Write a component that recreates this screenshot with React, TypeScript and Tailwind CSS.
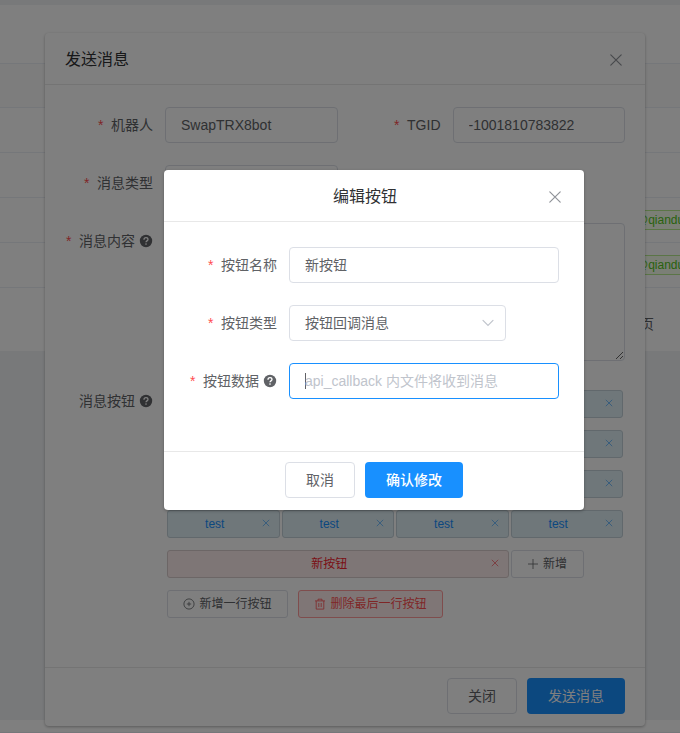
import React from 'react'

type IconProps = {
  className?: string;
}

type FieldProps = {
  label: string;
  required?: boolean;
  help?: boolean;
  children: React.ReactNode;
}

const CloseIcon = ({ className }: IconProps) => (
  <svg viewBox="0 0 16 16" fill="none" stroke="currentColor" className={className}>
    <path strokeLinecap="round" strokeWidth={1.2} d="M2.8 2.8l10.4 10.4M13.2 2.8L2.8 13.2" />
  </svg>
)

const HelpIcon = () => (
  <svg viewBox="0 0 14 14" className="ml-1 h-[14px] w-[14px] text-[#606266]">
    <circle cx="7" cy="7" r="6.2" fill="currentColor" />
    <path d="M5 5.7c0-1.2.9-2 2-2s2 .8 2 1.8c0 1.3-2 1.4-2 2.7" fill="none" stroke="#fff" strokeWidth="1.3" />
    <circle cx="7" cy="10.1" r=".8" fill="#fff" />
  </svg>
)

const PlusIcon = () => (
  <svg viewBox="0 0 12 12" fill="none" stroke="currentColor" className="h-3 w-3">
    <path d="M6 1v10M1 6h10" strokeWidth=".8" />
  </svg>
)

const CirclePlusIcon = () => (
  <svg viewBox="0 0 12 12" fill="none" stroke="currentColor" strokeWidth=".8" className="h-3 w-3">
    <circle cx="6" cy="6" r="5.1" />
    <path d="M6 3.8v4.4M3.8 6h4.4" />
  </svg>
)

const TrashIcon = () => (
  <svg viewBox="0 0 12 12" fill="none" stroke="currentColor" strokeWidth=".8" className="h-3 w-3">
    <path d="M1 2.9h10M4 2.9V1.2h4v1.7M2.2 2.9v8.2h7.6V2.9M4.8 5v4M7.2 5v4" />
  </svg>
)

const Field = ({ label, required, help, children }: FieldProps) => (
  <div className="flex">
    <div className="flex h-9 w-[100px] shrink-0 items-center justify-end pr-3 text-sm whitespace-nowrap text-[#606266]">
      {required && <span className="mr-[7.5px] text-[#ff4d4f]">*</span>}
      {label}
      {help && <HelpIcon />}
    </div>
    <div className="min-w-0 flex-1">{children}</div>
  </div>
)

const inputClass = 'h-9 w-full rounded border border-[#dcdfe6] bg-white px-[15px] text-sm text-[#606266] outline-none'

const ButtonTag = () => (
  <div className="flex h-7 items-center rounded-[3px] border border-[#c2d0d8] bg-[#dfeff5] pl-1 pr-[5px] text-xs text-[#1890ff]">
    <span className="flex-1 text-center">test</span>
    <CloseIcon className="relative -top-px h-4 w-4 p-[3.5px] opacity-80" />
  </div>
)

const TableRow = ({ tag }: { tag?: string }) => (
  <div className="flex h-[45px] items-center border-b border-[#ebeef5] pl-[626px]">
    {tag && (
      <span className="flex h-5 w-[90px] shrink-0 items-center border border-[#b7eb8f] bg-[#f6ffed] pl-[9px] text-xs text-[#52c41a]">{tag}</span>
    )}
  </div>
)

const SendDialog = () => (
  <div className="flex h-[693px] w-[600px] flex-col rounded bg-white shadow-[0_1px_3px_rgba(0,0,0,0.3)]">
    <div className="flex h-[52px] items-center justify-between border-b border-[#e8e8e8] px-5 pt-[2px] text-base text-[#303133]">
      <span>发送消息</span>
      <CloseIcon className="mr-[1px] h-4 w-4 text-[#909399]" />
    </div>
    <div className="flex flex-1 flex-col gap-[22px] px-5 pt-[22px]">
      <div className="grid grid-cols-2 gap-[15px]">
        <Field label="机器人" required>
          <input className={inputClass} defaultValue="SwapTRX8bot" />
        </Field>
        <Field label="TGID" required>
          <input className={inputClass} defaultValue="-1001810783822" />
        </Field>
      </div>
      <div className="grid grid-cols-2 gap-[15px]">
        <Field label="消息类型" required>
          <div className={inputClass} />
        </Field>
      </div>
      <Field label="消息内容" required help>
        <textarea className="block h-[138px] w-full resize rounded border border-[#dcdfe6] bg-white outline-none" />
      </Field>
      <Field label="消息按钮" help>
        <div className="flex flex-col gap-3 px-[2px] pt-[7px]">
          {/* The first rows sit behind the edit dialog */}
          {[0, 1, 2].map((row) => (
            <div key={row} className="grid grid-cols-4 gap-[2px]">
              <div className="col-span-3" />
              <div className="flex h-7 items-center justify-end rounded-[3px] border border-[#c2d0d8] bg-[#dfeff5] pr-[5px] text-[#1890ff]">
                <CloseIcon className="relative -top-px h-4 w-4 p-[3.5px] opacity-80" />
              </div>
            </div>
          ))}
          <div className="grid grid-cols-4 gap-[2px]">
            <ButtonTag />
            <ButtonTag />
            <ButtonTag />
            <ButtonTag />
          </div>
          <div className="grid grid-cols-4 gap-[2px]">
            <div className="col-span-3 flex h-7 items-center rounded-[3px] border border-[#d8cccc] bg-[#fdecec] pl-1 pr-[5px] text-xs text-[#f5222d]">
              <span className="flex-1 text-center">新按钮</span>
              <CloseIcon className="relative -top-px h-4 w-4 p-[3.5px] opacity-80" />
            </div>
            <button className="flex h-7 w-[73px] items-center justify-center gap-1 rounded-[3px] border border-[#dcdfe6] text-xs text-[#606266]">
              <PlusIcon />
              新增
            </button>
          </div>
          <div className="flex gap-[10px]">
            <button className="flex h-7 w-[121px] items-center justify-center gap-1 rounded-[3px] border border-[#dcdfe6] text-xs text-[#606266]">
              <CirclePlusIcon />
              新增一行按钮
            </button>
            <button className="flex h-7 w-[145px] items-center justify-center gap-1 rounded-[3px] border border-[#ff9a9b] bg-[#ffeded] text-xs text-[#ff4d4f]">
              <TrashIcon />
              删除最后一行按钮
            </button>
          </div>
        </div>
      </Field>
    </div>
    <div className="flex h-[59px] justify-end gap-[10px] border-t border-[#e8e8e8] px-5 pt-[10px] text-sm">
      <button className="h-9 w-[70px] rounded border border-[#dcdfe6] text-[#606266]">关闭</button>
      <button className="h-9 w-[98px] rounded bg-[#1890ff] text-white">发送消息</button>
    </div>
  </div>
)

const EditDialog = () => (
  <div className="flex h-[340px] w-[420px] flex-col rounded bg-white shadow-[0_1px_3px_rgba(0,0,0,0.3)]">
    <div className="relative flex h-[52px] items-center justify-center border-b border-[#e8e8e8] pr-[18px] pt-[2px] text-base text-[#303133]">
      <span>编辑按钮</span>
      <CloseIcon className="absolute right-[21px] h-4 w-4 text-[#909399]" />
    </div>
    <div className="flex flex-1 flex-col gap-[22px] px-[25px] pt-[25px]">
      <Field label="按钮名称" required>
        <input className="h-9 w-full rounded border border-[#dcdfe6] px-[15px] pb-[2px] text-sm text-[#606266] outline-none" defaultValue="新按钮" />
      </Field>
      <Field label="按钮类型" required>
        <div className="flex h-9 w-[217px] items-center justify-between rounded border border-[#dcdfe6] pl-[15px] pr-[10px] text-sm text-[#606266]">
          <span>按钮回调消息</span>
          <svg viewBox="0 0 14 14" fill="none" stroke="#c0c4cc" className="h-[14px] w-[14px]">
            <path strokeLinecap="round" strokeWidth="1.2" d="M2 4.4l5 5 5-5" />
          </svg>
        </div>
      </Field>
      <Field label="按钮数据" required help>
        <div className="flex h-9 items-center rounded border border-[#1890ff] pl-[15px] text-sm text-[#c0c4cc]">
          {/* Text caret */}
          <span className="-mr-px h-4 w-px bg-[#606266]" />
          <span>api_callback 内文件将收到消息</span>
        </div>
      </Field>
    </div>
    <div className="flex h-[59px] justify-center gap-[10px] border-t border-[#e8e8e8] pt-[10px] text-sm">
      <button className="h-9 w-[70px] rounded border border-[#dcdfe6] text-[#606266]">取消</button>
      <button className="h-9 w-[98px] rounded bg-[#1890ff] font-medium text-white">确认修改</button>
    </div>
  </div>
)

const App = () => {
  return (
    <div className="relative h-[733px] w-full overflow-hidden bg-[#f0f2f5] font-['Liberation_Sans','Noto_Sans_CJK_SC',sans-serif]">
      {/* List page */}
      <div className="flex h-full flex-col overflow-hidden pt-[5px]">
        <div className="h-[346px] shrink-0 bg-white">
          <div className="h-[59px] border-b border-[#ebeef5]" />
          <div className="h-11 border-b border-[#ebeef5] bg-[#fafafa]" />
          <TableRow />
          <TableRow />
          <TableRow tag="@qianduan" />
          <TableRow tag="@qianduan" />
          <div className="flex h-[72px] items-center pl-[640px] text-sm text-[#606266]">页</div>
        </div>
        <div className="mt-auto h-[13px] border-b border-[#ebeef5] bg-white" />
      </div>

      {/* Send message dialog */}
      <div className="absolute inset-0 flex justify-center pl-[10px] pt-[33px]">
        <SendDialog />
      </div>

      {/* Mask and edit dialog on top */}
      <div className="absolute inset-0 flex justify-center bg-black/50 pl-[68px] pt-[170px]">
        <EditDialog />
      </div>
    </div>
  )
}

export default App
